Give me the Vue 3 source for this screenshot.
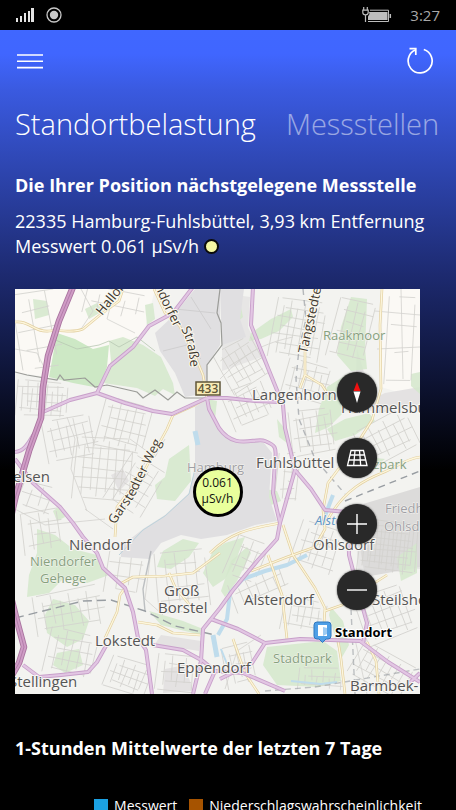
<script setup>
import { ref } from "vue";

const tabs = ["Standortbelastung", "Messstellen"];
const activeTab = ref(tabs[0]);

const legend = [
  { name: "Messwert", type: "value" },
  { name: "Niederschlagswahrscheinlichkeit", type: "rain" },
];

// residential blocks: x, y, width, height, street distance, angle
const blocks = [
  [2, 92, 50, 36, 5, 4],
  [30, 128, 52, 42, 8, -12],
  [85, 112, 48, 50, 8, 14],
  [60, 150, 56, 62, 8, 5],
  [8, 222, 42, 42, 9, -8],
  [100, 170, 40, 54, 8, 32],
  [206, 52, 44, 46, 7, -30],
  [258, 12, 50, 60, 7, 10],
  [270, 74, 48, 36, 7, 14],
  [212, 96, 42, 40, 7, -24],
  [318, 12, 38, 60, 9, 14],
  [262, 165, 24, 50, 7, 5],
  [276, 120, 46, 46, 7, -8],
  [344, 130, 56, 40, 8, -26],
  [215, 250, 32, 42, 8, 22],
  [280, 236, 44, 48, 8, 18],
  [345, 232, 56, 52, 4, 6],
  [345, 300, 55, 50, 8, -20],
  [20, 302, 70, 40, 9, -10],
  [32, 342, 48, 46, 8, 12],
  [92, 372, 42, 32, 6, 20],
  [142, 366, 38, 36, 7, 6],
  [210, 356, 32, 42, 7, -12],
  [268, 310, 42, 34, 7, 10],
  [284, 380, 44, 22, 6, 4],
  [338, 364, 60, 36, 7, 30],
  [142, 262, 50, 60, 10, -6],
  [70, 2, 62, 28, 13, 12],
  [2, 2, 44, 76, 17, -10],
  [372, 8, 30, 88, 26, 3],
  [4, 196, 36, 30, 10, 20],
  [216, 284, 60, 30, 9, -22],
  [92, 262, 40, 44, 11, 8],
];

// draws a slightly uneven grid of small streets
const streetPath = ([x, y, w, h, step]) => {
  let d = "";
  let i = 0;
  for (let a = 0; a <= w; a += step) {
    const cut = (i * 7) % 13;
    d += `M${x + a} ${y + cut}l${(i % 3) - 1} ${h - cut - ((i * 5) % 11)}`;
    i++;
  }
  for (let b = 0; b <= h; b += step + 2) {
    const cut = (i * 5) % 12;
    d += `M${x + cut} ${y + b}l${w - cut - ((i * 7) % 10)} ${(i % 4) - 2}`;
    i++;
  }
  return d;
};

const streets = blocks.map((b) => ({
  d: streetPath(b),
  turn: `rotate(${b[5]} ${b[0] + b[2] / 2} ${b[1] + b[3] / 2})`,
}));

const parks = [
  "M94 52l14-4 20 8 18 12 12 26 2 12-12-6-8 7-18-8-34-5 8-22z",
  "M18 10l14 2 2 14-14 4z",
  "M236 44l20-14 20-10 2 8-14 14-18 8-12 2z",
  "M210 20l16-2 2 10-14 12z",
  "M336 8l16 2-2 50 2 20-16 2-14-16 4-28z",
  "M312 98l22-14 14 8-8 20-26 26-14 6 4-24z",
  "M154 170l20-14 2 36-16 20-18-2-2-14 10-8z",
  "M22 240l18 6 18 14 24 6 12 20-22 8-24-4-14 14-22 4 2-22 8-22z",
  "M38 310l22 6 14 16-6 18-16 8-20-14-2-18z",
  "M42 364l22-4 4 16-18 8-12-8z",
  "M148 262l20-12 16 4-10 14-18 12-14-2z",
  "M188 284l10-22 12-8 20-6-8 20-12 22-12 8z",
  "M252 358l56-6 14 10 4 30-22 6-42-2-14-20z",
  "M316 318l12 14 6 24-8 14-12-44z",
  "M312 140l18-10 24-6 6 8-20 14-20 6z",
  "M250 200l12 2 4 10-10 4z",
  "M330 176l22-8 18 2-16 12-20 6z",
  "M134 322l34 10 20 8-2 6-40-10z",
  "M382 268l20-14v30l-16 8z",
  "M206 302l10-30 16-14 4 6-14 28-12 16z",
  "M396 85l9-2v22l-9-8z",
  "M130 16l8-2 2 16-8 6z",
  "M70 20l12-6 6 8-14 8z",
  "M192 110l10 2-2 18z",
  "M38 222l8-6 4 12-8 4z",
  "M262 130l8 10 2 14-8-6z",
];

const minorRoads = [
  "M0 33C14 31 20 44 34 42S56 45 68 40L85 26 104 12 108 0",
  "M139 0L150 24 164 36 178 62 188 86 192 109",
  "M192 109L180 116 158 126 152 140 128 184 102 218 100 248",
  "M105 295L118 288 150 287 178 284 205 264",
  "M110 299L105 306 102 323 90 349",
  "M123 333L142 336 158 344 185 346",
  "M178 320L160 298 154 284",
  "M195 264C215 244 232 240 265 234",
  "M253 266L267 306 272 350",
  "M236 282L272 268 300 258 310 240 308 221 313 194 340 158 357 131 366 100 365 36 367 0",
  "M268 236L278 266 300 299 310 319 308 350",
  "M310 322L327 316 350 300 372 286",
  "M313 230C330 200 352 190 367 184S390 170 405 168",
  "M300 20L290 63 290 86 285 99M290 86L307 96 316 110",
  "M322 345L326 370 330 405",
  "M352 353L361 372 364 405",
  "M218 350L230 384 244 405",
];

const mainRoads = [
  "M178 -2L158 24 134 37 118 58 95 77 82 104 55 111 28 123",
  "M82 104L110 114 138 122 157 125 192 109",
  "M192 109L194 120 204 139C220 162 240 148 250 152S262 158 260 172L258 204 265 234",
  "M192 109L212 109 240 112 264 113",
  "M238 -2L236 36 253 79 268 116 270 139 280 181 296 200 310 221 342 224",
  "M280 181L265 234 262 250 243 271 218 301 205 319 188 340 186 372 178 405",
  "M0 163C14 162 16 144 24 140",
  "M0 170L18 194 45 218 58 234 68 248 82 264 88 279 110 299 118 323 123 349 131 361 137 405",
  "M8 376L24 388 46 386 73 383 82 373 92 355",
  "M138 356L168 361 188 372 200 382",
  "M190 405L200 382 228 384 270 402",
  "M196 330L223 340 250 354 285 350 345 352 373 373 405 393",
  "M250 354L237 374 205 390",
  "M333 222L334 266 344 305 352 334 348 354",
  "M390 398L405 384",
];

const motorways = [
  "M58 -2L44 32 33 67 28 98 26 129 14 162 1 206 -4 228",
  "M-4 308L2 332 9 358 4 374 -4 388",
];

const placeLabels = [
  { text: "Langenhorn", x: 237, y: 111 },
  { text: "Hummelsbüttel", x: 326, y: 124 },
  { text: "Fuhlsbüttel", x: 241, y: 179 },
  { text: "Ohlsdorf", x: 298, y: 261 },
  { text: "elsen", x: -2, y: 193 },
  { text: "Niendorf", x: 54, y: 261 },
  { text: "Groß", x: 149, y: 307 },
  { text: "Borstel", x: 143, y: 324 },
  { text: "Alsterdorf", x: 229, y: 316 },
  { text: "Steilshoop", x: 357, y: 316 },
  { text: "Lokstedt", x: 80, y: 357 },
  { text: "Eppendorf", x: 162, y: 384 },
  { text: "Stellingen", x: -6, y: 398 },
  { text: "Barmbek-", x: 335, y: 402 },
];

const areaLabels = [
  { text: "Raakmoor", x: 308, y: 51, type: "park" },
  { text: "Heizpark", x: 338, y: 180, type: "park" },
  { text: "Niendorfer", x: 15, y: 277, type: "park" },
  { text: "Gehege", x: 25, y: 294, type: "park" },
  { text: "Stadtpark", x: 258, y: 374, type: "park" },
  { text: "Hamburg", x: 172, y: 183, type: "airport" },
  { text: "Friedhof", x: 370, y: 224, type: "airport" },
  { text: "Ohlsdorf", x: 369, y: 242, type: "airport" },
  { text: "Alster", x: 300, y: 236, type: "water" },
];
</script>

<template>
  <div class="phone">
    <header class="status-bar">
      <div class="status-group">
        <svg width="18" height="14" viewBox="0 0 18 14" fill="#e4e4e4">
          <path d="M0 10h2v4H0zM4 8h2v6H4zM8 5h2v9H8zM12 3h2v11h-2zM15 0h3v14h-3z" />
        </svg>
        <svg width="16" height="16" viewBox="0 0 16 16">
          <circle cx="8" cy="8" r="7" fill="none" stroke="#c8c8c8" stroke-width="1.3" />
          <circle cx="8" cy="8" r="4.2" fill="#c8c8c8" />
        </svg>
      </div>
      <div class="status-group right">
        <svg width="30" height="16" viewBox="0 0 30 16" fill="none" stroke="#bdbdbd">
          <path d="M8 3.2H26.5V14.5H6" />
          <path d="M7 5h18.500v8H6V9.500L7.500 7z" fill="#bdbdbd" stroke="none" />
          <path d="M28.300 7v4" stroke-width="1.500" />
          <path d="M1.700 0v3M5.300 0v3M.8 3.200h5.400v2.300q0 2.400-2.700 2.400T.8 5.500zM3.500 8v7" stroke-width="1.200" />
        </svg>
        <span class="time">3:27</span>
      </div>
    </header>

    <main class="page">
      <div class="toolbar">
        <button class="icon-button" aria-label="Menü">
          <svg width="26" height="16" viewBox="0 0 26 16" stroke="#fff" stroke-width="1.600">
            <path d="M0 2h26M0 8.300h26M0 14.600h26" />
          </svg>
        </button>
        <button class="icon-button" aria-label="Aktualisieren">
          <svg width="28" height="28" viewBox="0 0 28 28" fill="none" stroke="#fff" stroke-width="1.700">
            <path d="M17.800 2.500A12 12 0 1 1 9.200 3" />
            <path d="M3.500 1.700H9.800V8" />
          </svg>
        </button>
      </div>

      <nav class="tabs">
        <button
          v-for="tab in tabs"
          :key="tab"
          class="tab"
          :class="{ active: tab === activeTab }"
          @click="activeTab = tab"
        >
          {{ tab }}
        </button>
      </nav>

      <section class="station">
        <h2>Die Ihrer Position nächstgelegene Messstelle</h2>
        <p>22335 Hamburg-Fuhlsbüttel, 3,93 km Entfernung</p>
        <p>Messwert 0.061 µSv/h <span class="level"></span></p>
      </section>

      <section class="map">
        <svg class="map-canvas" viewBox="0 0 405 405">
          <rect width="405" height="405" fill="#f3f3f0" />
          <path d="M0 0H140L130 40 96 75 90 97 0 83zM368 0H405V110L366 98z" fill="#fbf9f5" />
          <path
            d="M207 4l28 4-2 30 14 30-40 14zM340 226l65-24v78l-62 4z"
            fill="#e7e6e5"
          />
          <path d="M338 218L405 198V278L350 288z" fill="#dcdbda" />
          <path d="M146 346l40 6-2 10-44-7zM342 60l12 40-14 10zM150 380l20-4 8 26-30 2zM340 118l30-14 35-6v18l-40 8zM96 186l12-6 6 12-10 10z" fill="#e4e2e2" />
          <path
            d="M42 44L60 50 78 60 94 56 92 78 84 99 58 94 34 88z"
            fill="#cde8c5"
          />
          <path v-for="d in parks" :key="d" :d="d" fill="#d3e8cb" opacity="0.85" />
          <path
            d="M38 50L62 60 84 56 94 52 104 58 122 48 140 62"
            fill="none"
            stroke="#b7c8b2"
            stroke-width="0.8"
          />
          <g fill="none" stroke="#d3d2ce" stroke-width="0.8">
            <path v-for="(s, i) in streets" :key="i" :d="s.d" :transform="s.turn" />
            <path
              d="M205 90C225 70 240 56 278 48M66 0L78 22 66 40M0 60L22 64 30 80M100 0L92 30 120 44M122 262L128 244 150 228 176 206M360 22l45 4M362 60l43 -2M386 0l2 90M115 150L140 168 150 150M52 128L60 150 56 180 72 222M0 220L30 236 90 230M136 262L130 310 148 326M340 350L352 405M210 400L222 362 246 346M98 240L70 220"
            />
          </g>
          <!-- airport and the fields north of it -->
          <g fill="#e0dfe1">
            <path d="M157 28L180 0H205V56L192 76V104L170 108 160 84 145 62 140 44zM205 0h24l-4 30 6 18-24 8z" />
            <path
              d="M180 118L192 110 204 139C222 160 236 150 249 154L257 164 254 208 262 232 240 236 212 246 186 250 166 246 146 254 134 270 106 268 105 258 128 240 150 226 174 204 180 180z"
            />
          </g>
          <path d="M104 266L128 241 150 227 174 205 180 180" fill="none" stroke="#bdd3dc" />
          <path d="M148 62L172 56 186 70M160 20L200 24M176 8L196 40" fill="none" stroke="#d0cfd0" />
          <!-- Alster and canals -->
          <g fill="none" stroke="#bfdcec" stroke-linejoin="round">
            <path d="M318 206L308 232M292 266L272 276 250 282 228 290 215 304 212 330 203 346" stroke-width="4" />
            <path d="M198 346l4 22M180 142l3 14" stroke-width="5" />
            <path d="M276 392l30 3 16-2M206 360l8 20" stroke-width="2" />
          </g>
          <!-- railways -->
          <g fill="none" stroke="#989da2" stroke-width="1.400">
            <path d="M0 329L32 321 68 312 96 311 130 322 160 337 200 346" stroke-dasharray="9 5" />
            <path d="M288 0L291 30 284 60 281 90 284 130 300 170 330 205" stroke-dasharray="6 5" opacity="0.7" />
            <path d="M330 212L360 200 405 182" stroke-dasharray="7 5" />
            <path d="M250 402L300 398 405 380M336 320L340 405" stroke-dasharray="6 4" opacity="0.6" />
            <path d="M136 262L128 300 130 322" opacity="0.6" />
          </g>
          <!-- city limit -->
          <path
            d="M0 83L12 86 42 91 45 86 49 91 70 89 80 98 92 96 122 103 128 109 140 101 153 111 162 103 170 109 190 109M192 104V76L207 56 206 34 202 24 205 0"
            fill="none"
            stroke="#9b9c98"
            stroke-width="1.200"
          />
          <g class="roads">
            <path v-for="d in minorRoads" :key="d" :d="d" stroke="#e2cf9f" stroke-width="2.600" />
            <path v-for="d in minorRoads" :key="d + 'c'" :d="d" stroke="#fdf6dc" stroke-width="1.300" />
            <path v-for="d in mainRoads" :key="d" :d="d" stroke="#c8a0ca" stroke-width="4" />
            <path v-for="d in mainRoads" :key="d + 'c'" :d="d" stroke="#e2c6e3" stroke-width="2.200" />
            <path v-for="d in motorways" :key="d" :d="d" stroke="#a9749f" stroke-width="6.500" />
            <path v-for="d in motorways" :key="d + 'c'" :d="d" stroke="#cf9cc5" stroke-width="4.700" />
            <path v-for="d in motorways" :key="d + 'm'" :d="d" stroke="#b37dab" stroke-width="1" />
          </g>

          <g class="area-labels">
            <text v-for="l in areaLabels" :key="l.text + l.type" :x="l.x" :y="l.y" :class="l.type">
              {{ l.text }}
            </text>
          </g>
          <g class="place-labels">
            <text v-for="l in placeLabels" :key="l.text" :x="l.x" :y="l.y">{{ l.text }}</text>
          </g>
          <defs>
            <path id="hallo" d="M87 27L122 -16" />
            <path id="ndorfer" d="M140 -3L147 14 162 44" />
            <path id="strasse" d="M166 40C172 50 174 60 176 84" />
            <path id="tangstedter" d="M292 65L302 20 311 -24" />
            <path id="garstedter" d="M101 236C104 226 118 214 125 196L150 146" />
          </defs>
          <g class="street-labels">
            <text><textPath href="#hallo">Halloh</textPath></text>
            <text><textPath href="#ndorfer">ndorfer</textPath></text>
            <text><textPath href="#strasse">Straße</textPath></text>
            <text><textPath href="#tangstedter">Tangstedter</textPath></text>
            <text><textPath href="#garstedter">Garstedter Weg</textPath></text>
          </g>

          <rect x="181" y="93" width="24" height="13" fill="#f8ebb5" stroke="#5f5638" stroke-width="1.500" />
          <text x="193" y="104" class="shield">433</text>

          <path d="M302 333h11q3 0 3 3v11q0 3-3 3h-2l-3.500 3.500-3.500-3.500h-2q-3 0-3-3v-11q0-3 3-3z" fill="#4f9fe6" stroke="#2f78bf" />
          <path d="M303 336h9v11h-9z" fill="#fff" />
          <path d="M308 338l4 1v6l-4 2z" fill="#9ccbf3" />
          <text x="320" y="348" class="position">Standort</text>
        </svg>

        <div class="measure">
          <span>0.061</span>
          <span>µSv/h</span>
        </div>

        <div class="map-controls">
          <button aria-label="Norden">
            <svg width="40" height="40" viewBox="0 0 40 40">
              <path d="M20 10l3.500 9h-7z" fill="#f01010" />
              <path d="M16.500 19.500h7L20 31z" fill="#fff" />
            </svg>
          </button>
          <button aria-label="Neigen">
            <svg width="40" height="40" viewBox="0 0 40 40" fill="none" stroke="#fff" stroke-width="1.300">
              <path d="M14 12.500h12.500L30 27.500H10.500zM13 17h14.500M12 22h16.500M18 12.500L16.700 27.500M22.500 12.500L23.700 27.500" />
            </svg>
          </button>
          <button aria-label="Vergrößern">
            <svg width="40" height="40" viewBox="0 0 40 40" stroke="#fff" stroke-width="1.400">
              <path d="M10 20h20M20 10v20" />
            </svg>
          </button>
          <button aria-label="Verkleinern">
            <svg width="40" height="40" viewBox="0 0 40 40" stroke="#fff" stroke-width="1.400">
              <path d="M10 20h20" />
            </svg>
          </button>
        </div>
      </section>

      <section class="history">
        <h2>1-Stunden Mittelwerte der letzten 7 Tage</h2>
        <ul class="legend">
          <li v-for="item in legend" :key="item.name">
            <span class="swatch" :class="item.type"></span>{{ item.name }}
          </li>
        </ul>
      </section>
    </main>
  </div>
</template>

<style>
body {
  margin: 0;
  background: #000;
}
</style>

<style scoped>
* {
  box-sizing: border-box;
}

.phone {
  display: flex;
  flex-direction: column;
  height: 100vh;
  overflow: hidden;
  background: #000;
  color: #fff;
  font-family: "Open Sans", "Noto Sans", sans-serif;
}

button {
  padding: 0;
  border: none;
  background: none;
  color: inherit;
  font-family: inherit;
  cursor: pointer;
}

svg {
  display: block;
}

.status-bar {
  display: flex;
  flex-shrink: 0;
  justify-content: space-between;
  align-items: center;
  height: 30px;
  padding: 0 16px;
}

.status-group {
  display: flex;
  align-items: center;
  gap: 12px;
}

.status-group.right {
  gap: 18px;
}

.time {
  color: #a8a8a8;
  font-size: 15px;
}

.page {
  flex: 1;
  overflow-y: auto;
  scrollbar-width: none;
  background: linear-gradient(#4067ff 0, #4066ff 24px, #3a5ae0 60px, #1d2a70 244px, #000 440px);
}

.toolbar {
  display: flex;
  justify-content: space-between;
  align-items: center;
  height: 62px;
  padding: 0 22px 0 17px;
}

.tabs {
  display: flex;
  gap: 30px;
  padding: 8px 15px 0;
  overflow: hidden;
}

.tab {
  font-size: 29px;
  font-weight: 300;
  line-height: 48px;
  opacity: 0.5;
}

.tab.active {
  opacity: 1;
}

.station {
  padding: 23px 15px 0;
}

h2 {
  margin: 0;
  font-size: 18px;
  font-weight: 700;
  line-height: 28px;
}

.station h2 {
  margin-bottom: 10px;
}

.station p {
  margin: 0;
  font-size: 18px;
  line-height: 25px;
  white-space: nowrap;
}

.level {
  display: inline-block;
  width: 15px;
  height: 15px;
  border: 2px solid #0b0b0b;
  border-radius: 50%;
  background: #f5f7a3;
  vertical-align: -1px;
}

.map {
  position: relative;
  margin: 30px 36px 0 15px;
  overflow: hidden;
}

.map-canvas {
  width: 100%;
}

.roads path {
  fill: none;
  stroke-linejoin: round;
}

.place-labels text {
  fill: #555;
  stroke: #f8f7f4;
  stroke-width: 2px;
  paint-order: stroke;
  font-size: 15px;
}

.area-labels text {
  stroke: #f5f4f0;
  stroke-width: 1px;
  paint-order: stroke;
  font-size: 13px;
}

.area-labels .park {
  fill: #86a17e;
}

.area-labels .airport {
  fill: #a09fa5;
}

.area-labels .water {
  fill: #5b93c4;
  font-style: italic;
}

.street-labels text {
  fill: #3f382e;
  stroke: #fbf8ee;
  stroke-width: 2px;
  paint-order: stroke;
  font-size: 13px;
}

.shield {
  fill: #5f5638;
  font-size: 12px;
  font-weight: 600;
  text-anchor: middle;
}

.position {
  fill: #000;
  stroke: #fff;
  stroke-width: 2px;
  paint-order: stroke;
  font-size: 13px;
  font-weight: 700;
}

.measure {
  position: absolute;
  top: 50%;
  left: 50%;
  display: flex;
  flex-direction: column;
  justify-content: center;
  width: 50px;
  height: 50px;
  padding-bottom: 2px;
  border: 3px solid #000;
  border-radius: 50%;
  background: #e9ff9c;
  color: #111;
  font-size: 12px;
  line-height: 16px;
  text-align: center;
  transform: translate(-50%, -50%);
}

.map-controls {
  position: absolute;
  top: 83px;
  right: 43px;
  display: flex;
  flex-direction: column;
  gap: 26px;
}

.map-controls button {
  width: 40px;
  height: 40px;
  border-radius: 50%;
  background: #292929;
  box-shadow: 0 0 2px #444;
}

.history {
  padding: 40px 15px 24px;
}

.legend {
  display: flex;
  justify-content: center;
  gap: 12px;
  margin: 34px 0 0;
  padding: 0 0 0 60px;
  list-style: none;
  font-size: 14px;
  line-height: 20px;
  white-space: nowrap;
}

.legend li {
  display: flex;
  align-items: center;
  gap: 6px;
}

.swatch {
  width: 14px;
  height: 14px;
}

.swatch.value {
  background: #1ba1e2;
}

.swatch.rain {
  background: #a65300;
}
</style>
